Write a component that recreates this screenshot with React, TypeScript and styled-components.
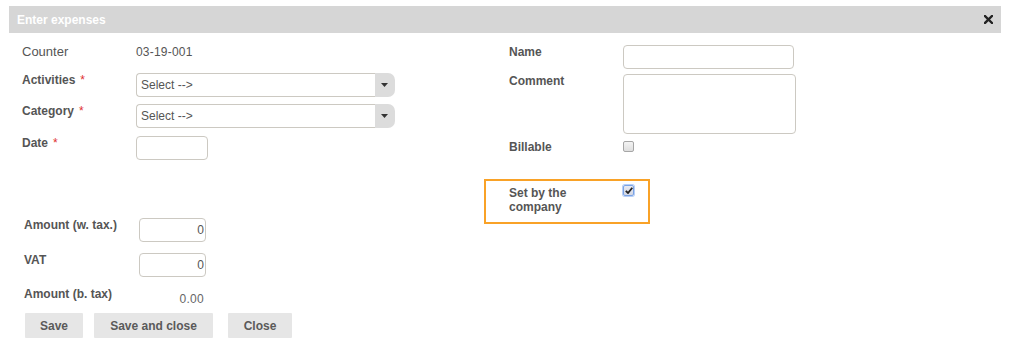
import React from "react";
import styled, { createGlobalStyle } from "styled-components";

const GlobalStyle = createGlobalStyle`
  html, body { margin: 0; padding: 0; background: #fff; }
  body {
    font-family: "Liberation Sans", Arial, sans-serif;
    font-size: 12px;
    color: #555;
  }
`;

const Dialog = styled.div`
  margin: 6px 0 0 9px;
  width: 992px;
`;

const Header = styled.div`
  height: 27px;
  background: #d6d6d6;
  display: flex;
  align-items: center;
  justify-content: space-between;
  padding: 0 8px 0 8px;
  box-sizing: border-box;
`;

const Title = styled.span`
  color: #fff;
  font-weight: bold;
  font-size: 12px;
  line-height: 14px;
  padding-top: 1px;
`;

const CloseIcon = styled.svg`
  width: 9px;
  height: 9px;
`;

const Body = styled.div`
  display: grid;
  grid-template-columns: 475px 1fr;
`;

const LeftCol = styled.div`
  padding: 12px 0 0 13px;
  display: flex;
  flex-direction: column;
`;

const RightCol = styled.div`
  padding: 12px 0 0 0;
  display: flex;
  flex-direction: column;
`;

const Row = styled.div<{ $mb?: number }>`
  display: flex;
  align-items: flex-start;
  margin-bottom: ${(p) => p.$mb ?? 0}px;
`;

const Label = styled.div<{ $w?: number; $regular?: boolean }>`
  width: ${(p) => p.$w ?? 114}px;
  flex: none;
  font-weight: ${(p) => (p.$regular ? "normal" : "bold")};
  font-size: ${(p) => (p.$regular ? 13 : 12)}px;
  line-height: 14px;
  color: #555;
`;

const Required = styled.span`
  color: #e03030;
  margin-left: 5px;
  font-weight: normal;
`;

const Value = styled.div`
  font-size: 12px;
  line-height: 14px;
  color: #555;
  letter-spacing: 0.2px;
`;

const SelectBox = styled.div`
  width: 259px;
  height: 24px;
  display: flex;
`;

const SelectField = styled.div`
  flex: 1;
  border: 1px solid #ccc9c2;
  border-right: none;
  border-radius: 4px 0 0 4px;
  display: flex;
  align-items: center;
  padding-left: 4px;
  color: #555;
  font-size: 12px;
`;

const SelectButton = styled.div`
  width: 19px;
  flex: none;
  background: #dcdcdc;
  border-radius: 0 7px 7px 0;
  display: flex;
  align-items: center;
  justify-content: center;
  padding-right: 1px;
`;

const TextInput = styled.div<{ $w: number; $h?: number; $right?: boolean }>`
  width: ${(p) => p.$w}px;
  height: ${(p) => p.$h ?? 24}px;
  box-sizing: border-box;
  border: 1px solid #ccc9c2;
  border-radius: 4px;
  display: flex;
  align-items: center;
  justify-content: ${(p) => (p.$right ? "flex-end" : "flex-start")};
  padding: 0 1px 0 4px;
  font-size: 12px;
  color: #555;
  background: #fff;
`;

const Checkbox = styled.div<{ $checked?: boolean }>`
  width: 11px;
  height: 11px;
  box-sizing: border-box;
  border-radius: 2px;
  border: 1px solid ${(p) => (p.$checked ? "#7aa3e6" : "#a6a6a6")};
  background: ${(p) =>
    p.$checked
      ? "linear-gradient(#e8eaf2, #d4d8e4)"
      : "linear-gradient(#f4f4f4, #dedede)"};
  box-shadow: ${(p) => (p.$checked ? "0 0 0 1px #b8cff5" : "none")};
  display: flex;
  align-items: center;
  justify-content: center;
  margin-top: ${(p) => (p.$checked ? -1 : 1)}px;
`;

const AmountSection = styled.div`
  margin-top: 58px;
  padding-left: 2px;
  display: flex;
  flex-direction: column;
`;

const ComputedValue = styled.div`
  width: 67px;
  text-align: right;
  padding-top: 5px;
  padding-right: 2px;
  box-sizing: border-box;
  font-size: 12px;
  line-height: 14px;
  color: #666;
  letter-spacing: 0.3px;
`;

const ButtonBar = styled.div`
  margin-top: 7px;
  padding-left: 3px;
  display: flex;
`;

const Button = styled.button<{ $w: number; $ml?: number }>`
  width: ${(p) => p.$w}px;
  height: 25px;
  margin-left: ${(p) => p.$ml ?? 0}px;
  border: none;
  border-radius: 1px;
  background: #e6e6e6;
  color: #5a5a5a;
  font-family: "Liberation Sans", Arial, sans-serif;
  font-weight: bold;
  font-size: 12px;
  padding: 0;
`;

const FieldsRight = styled.div`
  padding-left: 25px;
  display: flex;
  flex-direction: column;
`;

const Highlight = styled.div`
  margin-top: 25px;
  width: 166px;
  height: 45px;
  box-sizing: border-box;
  border: 2px solid #f9a227;
  padding: 5px 0 0 23px;
  display: flex;
  align-items: flex-start;
`;

const Arrow = () => (
  <svg width="7" height="4" viewBox="0 0 7 4">
    <path d="M0 0 H7 L3.5 4 Z" fill="#333" />
  </svg>
);

const Check = () => (
  <svg width="8" height="7" viewBox="0 0 8 7">
    <path d="M0.8 3.8 L3 6 L7.3 0.8" stroke="#222" strokeWidth="1.8" fill="none" />
  </svg>
);

export default function App() {
  return (
    <>
      <GlobalStyle />
      <Dialog>
        <Header>
          <Title>Enter expenses</Title>
          <CloseIcon viewBox="0 0 9 9">
            <path d="M1 1 L8 8 M8 1 L1 8" stroke="#222" strokeWidth="2.4" strokeLinecap="square" />
          </CloseIcon>
        </Header>
        <Body>
          <LeftCol>
            <Row $mb={14}>
              <Label $regular>Counter</Label>
              <Value>03-19-001</Value>
            </Row>
            <Row $mb={7}>
              <Label>
                Activities<Required>*</Required>
              </Label>
              <SelectBox>
                <SelectField>Select --&gt;</SelectField>
                <SelectButton>
                  <Arrow />
                </SelectButton>
              </SelectBox>
            </Row>
            <Row $mb={8}>
              <Label>
                Category<Required>*</Required>
              </Label>
              <SelectBox>
                <SelectField>Select --&gt;</SelectField>
                <SelectButton>
                  <Arrow />
                </SelectButton>
              </SelectBox>
            </Row>
            <Row>
              <Label>
                Date<Required>*</Required>
              </Label>
              <TextInput $w={72} />
            </Row>
            <AmountSection>
              <Row $mb={11}>
                <Label $w={115}>Amount (w. tax.)</Label>
                <TextInput $w={67} $right>0</TextInput>
              </Row>
              <Row $mb={10}>
                <Label $w={115}>VAT</Label>
                <TextInput $w={67} $right>0</TextInput>
              </Row>
              <Row>
                <Label $w={115}>Amount (b. tax)</Label>
                <ComputedValue>0.00</ComputedValue>
              </Row>
            </AmountSection>
            <ButtonBar>
              <Button $w={58}>Save</Button>
              <Button $w={119} $ml={11}>Save and close</Button>
              <Button $w={64} $ml={15}>Close</Button>
            </ButtonBar>
          </LeftCol>
          <RightCol>
            <FieldsRight>
              <Row $mb={5}>
                <Label>Name</Label>
                <TextInput $w={171} />
              </Row>
              <Row $mb={6}>
                <Label>Comment</Label>
                <TextInput $w={173} $h={60} />
              </Row>
              <Row>
                <Label>Billable</Label>
                <Checkbox />
              </Row>
            </FieldsRight>
            <Highlight>
              <Label>
                Set by the
                <br />
                company
              </Label>
              <Checkbox $checked>
                <Check />
              </Checkbox>
            </Highlight>
          </RightCol>
        </Body>
      </Dialog>
    </>
  );
}
